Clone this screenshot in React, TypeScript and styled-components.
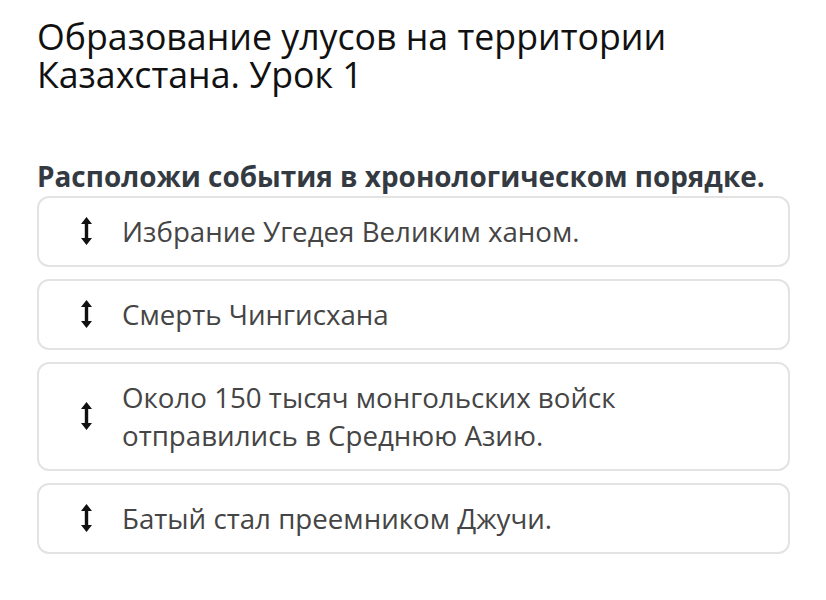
import styled, { createGlobalStyle } from 'styled-components'

const GlobalStyle = createGlobalStyle`
  body {
    margin: 0;
    background: #ffffff;
    font-family: 'Open Sans', 'Noto Sans', sans-serif;
  }
`

const Page = styled.div`
  padding: 17px 36px 0 37px;
`

const Title = styled.h1`
  margin: 0;
  font-size: 35.7px;
  line-height: 38px;
  font-weight: 400;
  color: #111111;
  width: 700px;
`

const Question = styled.h2`
  margin: 65px 0 2px;
  font-size: 27.9px;
  line-height: 36px;
  font-weight: 700;
  color: #343a42;
`

const List = styled.div`
  display: flex;
  flex-direction: column;
  gap: 12px;
`

const Card = styled.div`
  display: flex;
  align-items: center;
  gap: 30px;
  padding: 14px 20px 15px 42px;
  border: 2px solid #e3e3e3;
  border-radius: 12px;
`

const Handle = styled.svg`
  flex: none;
  width: 11px;
  height: 28px;
`

const Label = styled.span`
  font-size: 27.7px;
  line-height: 38px;
  color: #454545;
  max-width: 560px;
`

const items = [
  'Избрание Угедея Великим ханом.',
  'Смерть Чингисхана',
  'Около 150 тысяч монгольских войск отправились в Среднюю Азию.',
  'Батый стал преемником Джучи.',
]

const DragIcon = () => (
  <Handle viewBox="0 0 11 28">
    <path d="M5.5 0 L11 7 L7.2 7 L7.2 21 L11 21 L5.5 28 L0 21 L3.8 21 L3.8 7 L0 7 Z" fill="#111" />
  </Handle>
)

export default function App() {
  return (
    <Page>
      <GlobalStyle />
      <Title>Образование улусов на территории Казахстана. Урок 1</Title>
      <Question>Расположи события в хронологическом порядке.</Question>
      <List>
        {items.map((text) => (
          <Card key={text}>
            <DragIcon />
            <Label>{text}</Label>
          </Card>
        ))}
      </List>
    </Page>
  )
}
